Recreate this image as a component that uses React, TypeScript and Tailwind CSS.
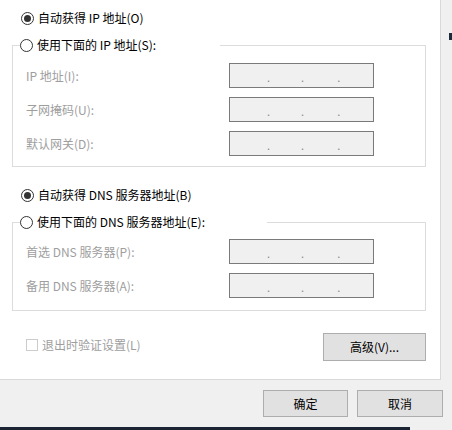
import React from 'react';

const FONT = { fontFamily: '"Noto Sans CJK SC", "Noto Sans", sans-serif' };

function Radio({ checked, label }: { checked?: boolean; label: string }) {
  return (
    <div className="flex items-center h-[14px] bg-white">
      <div className="w-[13px] h-[13px] rounded-full border border-[#333333] flex items-center justify-center bg-white">
        {checked && <div className="w-[7px] h-[7px] rounded-full bg-[#333333]" />}
      </div>
      <span className="ml-[4px] text-[12px] leading-none text-black whitespace-nowrap">{label}</span>
    </div>
  );
}

function IpBox() {
  return (
    <div className="w-[145px] h-[25px] border border-[#7a7a7a] bg-[#f0f0f0] flex items-center text-[11px] text-[#8a8a8a] leading-none">
      <span className="ml-[37px] pt-[3px]">.</span>
      <span className="ml-[31px] pt-[3px]">.</span>
      <span className="ml-[33px] pt-[3px]">.</span>
    </div>
  );
}

function Field({ label }: { label: string }) {
  return (
    <div className="flex items-center pl-[13px]">
      <span className="w-[203px] text-[12px] text-[#9e9e9e] whitespace-nowrap">{label}</span>
      <IpBox />
    </div>
  );
}

function Group({
  label,
  gapWidth,
  fields,
  pt,
  pb,
}: {
  label: string;
  gapWidth: string;
  fields: string[];
  pt: string;
  pb: string;
}) {
  return (
    <div>
      {/* group header: line, radio label, line */}
      <div className="flex h-[14px]">
        <div className="w-[8px] h-[7px] self-end border-t border-l border-[#dcdcdc]" />
        <div className={`${gapWidth} flex items-center`}>
          <Radio label={label} />
        </div>
        <div className="flex-1 h-[7px] self-end border-t border-r border-[#dcdcdc]" />
      </div>
      <div className={`border-l border-r border-b border-[#dcdcdc] flex flex-col gap-[9px] ${pt} ${pb}`}>
        {fields.map((f) => (
          <Field key={f} label={f} />
        ))}
      </div>
    </div>
  );
}

function Button({ label, w }: { label: string; w: string }) {
  return (
    <div className={`${w} h-[27px] bg-[#e1e1e1] border border-[#adadad] flex items-center justify-center text-[12px] text-black`}>
      {label}
    </div>
  );
}

export default function App() {
  return (
    <div className="w-[452px] h-[430px] bg-[#f0f0f0] flex flex-col overflow-hidden" style={FONT}>
      <div className="flex h-[380px]">
        {/* main white pane */}
        <div className="w-[441px] h-full bg-white border-r border-b border-[#d9d9d9] pl-[12px] pr-[14px] flex flex-col">
          <div className="mt-[11px] pl-[9px]">
            <Radio checked label="自动获得 IP 地址(O)" />
          </div>
          <div className="mt-[13px]">
            <Group
              label="使用下面的 IP 地址(S):"
              gapWidth="w-[200px]"
              fields={['IP 地址(I):', '子网掩码(U):', '默认网关(D):']}
              pt="pt-[11px]"
              pb="pb-[10px]"
            />
          </div>
          <div className="mt-[21px] pl-[9px]">
            <Radio checked label="自动获得 DNS 服务器地址(B)" />
          </div>
          <div className="mt-[13px]">
            <Group
              label="使用下面的 DNS 服务器地址(E):"
              gapWidth="w-[247px]"
              fields={['首选 DNS 服务器(P):', '备用 DNS 服务器(A):']}
              pt="pt-[10px]"
              pb="pb-[12px]"
            />
          </div>
          <div className="mt-[22px] flex justify-between items-start">
            <div className="flex items-center mt-[3px] pl-[14px]">
              <div className="w-[12px] h-[12px] border border-[#cccccc] bg-white" />
              <span className="ml-[4px] text-[12px] text-[#9e9e9e]">退出时验证设置(L)</span>
            </div>
            <div className="w-[103px] h-[28px] bg-[#e1e1e1] border border-[#adadad] flex items-center justify-center text-[12px] text-black">
              高级(V)...
            </div>
          </div>
        </div>
        {/* right edge strip */}
        <div className="flex-1 flex flex-col">
          <div className="mt-[33px] ml-auto w-[3px] h-[7px] bg-[#1c2b3c]" />
        </div>
      </div>
      <div className="flex justify-end gap-[9px] pr-[9px] pt-[10px]">
        <Button label="确定" w="w-[85px]" />
        <Button label="取消" w="w-[86px]" />
      </div>
      <div className="mt-auto h-[3px] flex">
        <div className="w-[410px] bg-[#1a2433]" />
      </div>
    </div>
  );
}
